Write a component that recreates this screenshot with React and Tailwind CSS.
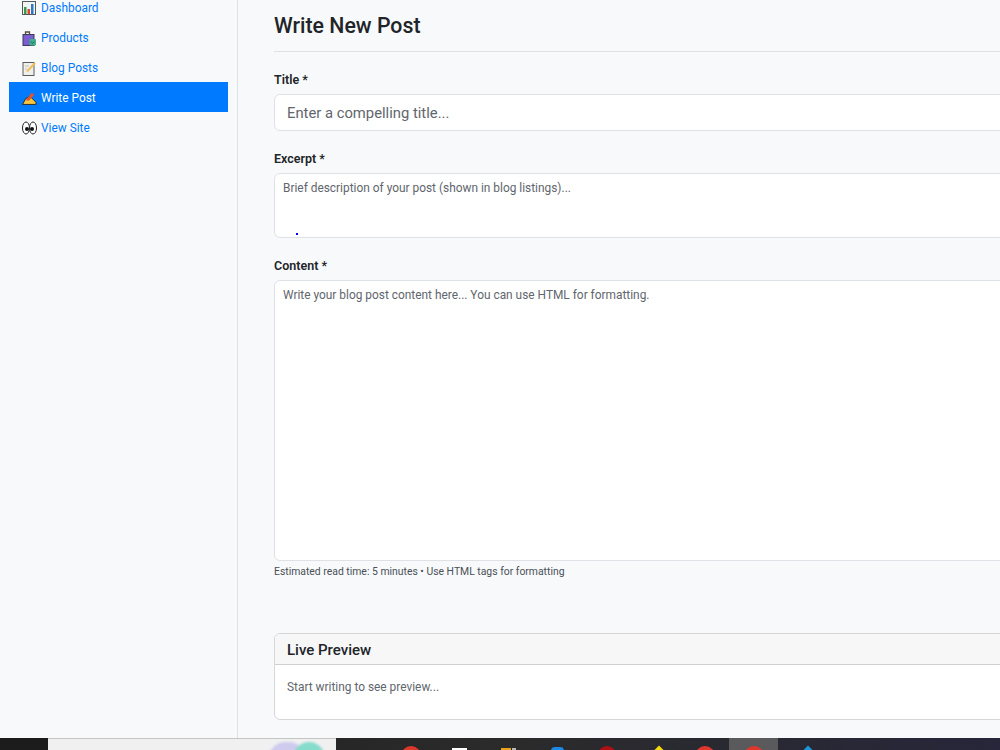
import React from 'react';

const links = [
    { label: 'Dashboard', icon: <ChartIcon /> },
    { label: 'Products', icon: <BagIcon /> },
    { label: 'Blog Posts', icon: <MemoIcon /> },
    { label: 'Write Post', icon: <WriteIcon />, active: true },
    { label: 'View Site', icon: <EyesIcon /> },
];

function ChartIcon() {
    return (
        <svg width="14" height="14" viewBox="0 0 14 14">
            <rect x="0.5" y="0.5" width="13" height="13" fill="#f4f4f4" stroke="#55585c" />
            <rect x="2" y="6" width="2.5" height="7" fill="#2f9e4f" />
            <rect x="5.5" y="8" width="2.5" height="5" fill="#e2452f" />
            <rect x="9" y="3" width="2.5" height="10" fill="#2a78c8" />
        </svg>
    );
}

function BagIcon() {
    return (
        <svg width="15" height="15" viewBox="0 0 14 15">
            <path d="M3 4V1h4v3" fill="none" stroke="#5a4a3a" strokeWidth="1.3" />
            <rect x="0.5" y="3.5" width="11" height="11" fill="#7b5fd0" stroke="#3d3a55" />
            <rect x="7" y="8" width="6.5" height="6.5" rx="1" fill="#3fae8e" />
            <path d="M8.5 10.5l1.5 2 2-2" fill="none" stroke="#1f6f58" />
        </svg>
    );
}

function MemoIcon() {
    return (
        <svg width="15" height="15" viewBox="0 0 14 15">
            <rect x="0.5" y="1.5" width="11" height="13" fill="#f0efe9" stroke="#5a5d60" />
            <path d="M4.5 10.5l8-8.5" stroke="#ecc05a" strokeWidth="2" />
            <path d="M2.5 5h4M2.5 8h2" stroke="#c0c0c0" />
        </svg>
    );
}

function WriteIcon() {
    return (
        <svg width="15" height="14" viewBox="0 0 14 13">
            <path d="M0.5 12.5 3.5 7l4-2 5.5 5.5v2z" fill="#f8c63f" stroke="#1d1d1d" strokeWidth="0.8" />
            <path d="M3.5 8.5l5.5-7 2.5 2-5 5.5z" fill="#e2552a" />
        </svg>
    );
}

function EyesIcon() {
    return (
        <svg width="15" height="14" viewBox="0 0 15 14">
            <ellipse cx="4" cy="7" rx="3.5" ry="6" fill="#fff" stroke="#222" />
            <ellipse cx="11" cy="7" rx="3.5" ry="6" fill="#fff" stroke="#222" />
            <circle cx="5" cy="8" r="2" fill="#111" />
            <circle cx="10" cy="8" r="2" fill="#111" />
        </svg>
    );
}

function Taskbar() {
    return (
        <div className="flex h-3 shrink-0 overflow-hidden bg-gradient-to-r from-[#1e1e1e] via-[#2b2b2b] to-[#27263a]">
            <div className="w-12 shrink-0 bg-[#1c1c1c]" />
            <div className="flex h-3 w-[288px] shrink-0 justify-end border-t border-[#c4c4c4] bg-[#f0f0f0] pt-[3px] pr-[11px]">
                <span className="h-8 w-9 shrink-0 rounded-full bg-[#cfcbee] blur-[1px]" />
                <span className="-ml-3 h-8 w-8 shrink-0 rounded-full bg-[#86dccb] blur-[1px]" />
            </div>
            <div className="ml-[50px] flex">
                <div className="flex w-[49px] justify-center pt-2"><span className="h-5 w-5 rounded-full bg-[#e0362c]" /></div>
                <div className="flex w-[49px] justify-center pt-[10px]"><span className="h-4 w-[15px] bg-white" /></div>
                <div className="flex w-[49px] justify-center gap-px pt-[10px]"><span className="h-4 w-[10px] bg-[#e8a317]" /><span className="h-4 w-[4px] bg-[#b8b8b8]" /></div>
                <div className="flex w-[49px] justify-center pt-[9px]"><span className="h-5 w-[13px] rounded-sm bg-[#1e88e5]" /></div>
                <div className="flex w-[49px] justify-center pt-2"><span className="h-5 w-[18px] rounded-full bg-[#b01015]" /></div>
                <div className="flex w-[49px] justify-center pt-[10px] pl-[6px]"><span className="h-3 w-3 rotate-45 bg-[#f5d90a]" /></div>
                <div className="flex w-[49px] justify-center pt-2"><span className="h-5 w-5 rounded-full bg-[#e0362c]" /></div>
                <div className="flex w-[49px] justify-center bg-[#5a5a5c] pt-2"><span className="h-5 w-5 rounded-full bg-[#e0362c]" /></div>
                <div className="flex w-[49px] justify-center pt-[10px] pl-[10px]"><span className="h-3 w-3 rotate-45 bg-[#1b95d8]" /></div>
            </div>
        </div>
    );
}

function App() {
    return (
        <div className="flex h-[750px] w-[1000px] flex-col overflow-hidden bg-[#f8f9fa] font-['Roboto','Noto_Sans',sans-serif] text-[#212529]">
            <div className="flex min-h-0 flex-1">
                {/* Sidebar */}
                <aside className="w-[238px] shrink-0 overflow-hidden border-r border-[#dee2e6] bg-[#f8f9fa] pl-[9px]">
                    <nav className="mt-[-8px] flex w-[219px] flex-col">
                        {links.map((link) => (
                            <a
                                key={link.label}
                                href="#"
                                className={`flex h-[30px] items-center pl-[13px] text-[11.9px] ${link.active ? 'bg-[#007bff] text-white' : 'text-[#007bff]'}`}
                            >
                                <span className="mr-1 flex w-[15px] justify-start pt-[2px]">{link.icon}</span>
                                <span className="pt-[4px]">{link.label}</span>
                            </a>
                        ))}
                    </nav>
                </aside>

                {/* Main content */}
                <main className="relative min-w-0 flex-1 overflow-hidden pl-9">
                    <div className="w-[800px]">
                        <div className="h-[52px] border-b border-[#dee2e6] pt-[11px]">
                            <h1 className="text-[21.3px] leading-[30px] font-medium">Write New Post</h1>
                        </div>

                        <label className="mt-[19px] block text-[12.5px] leading-[18px] font-semibold">Title *</label>
                        <input
                            placeholder="Enter a compelling title..."
                            className="mt-[5px] block h-[37px] w-full rounded-[6px] border border-[#dee2e6] bg-white px-3 text-[14.8px] outline-none placeholder:text-[#5f666d]"
                        />

                        <label className="mt-[19px] block text-[12.5px] leading-[18px] font-semibold">Excerpt *</label>
                        <textarea
                            placeholder="Brief description of your post (shown in blog listings)..."
                            className="mt-[5px] block h-[65px] w-full resize-none rounded-[6px] border border-[#dee2e6] bg-white px-2 py-[5px] text-[11.9px] leading-[18px] outline-none placeholder:text-[#5f666d]"
                        />
                        <span className="absolute top-[233px] left-[58px] h-[2px] w-[2px] bg-[#0000ff]" />

                        <label className="mt-[19px] block text-[12.5px] leading-[18px] font-semibold">Content *</label>
                        <textarea
                            placeholder="Write your blog post content here... You can use HTML for formatting."
                            className="mt-[5px] block h-[281px] w-full resize-none rounded-[6px] border border-[#dee2e6] bg-white px-2 py-[5px] text-[11.9px] leading-[18px] outline-none placeholder:text-[#5f666d]"
                        />
                        <p className="mt-[3px] text-[10.4px] leading-[16px] text-[#495057]">Estimated read time: 5 minutes • Use HTML tags for formatting</p>

                        <div className="mt-[53px] overflow-hidden rounded-[6px] border border-[#d5d7d9] bg-white">
                            <div className="flex h-[31px] items-center border-b border-[#ced0d2] bg-[#f7f7f7] px-3 pt-[2px]">
                                <h2 className="text-[15px] font-medium">Live Preview</h2>
                            </div>
                            <div className="h-[54px] px-3 pt-[13px] text-[11.9px] leading-[18px] text-[#5f666d]">Start writing to see preview...</div>
                        </div>
                    </div>
                </main>
            </div>
            <Taskbar />
        </div>
    );
}

export default App;
